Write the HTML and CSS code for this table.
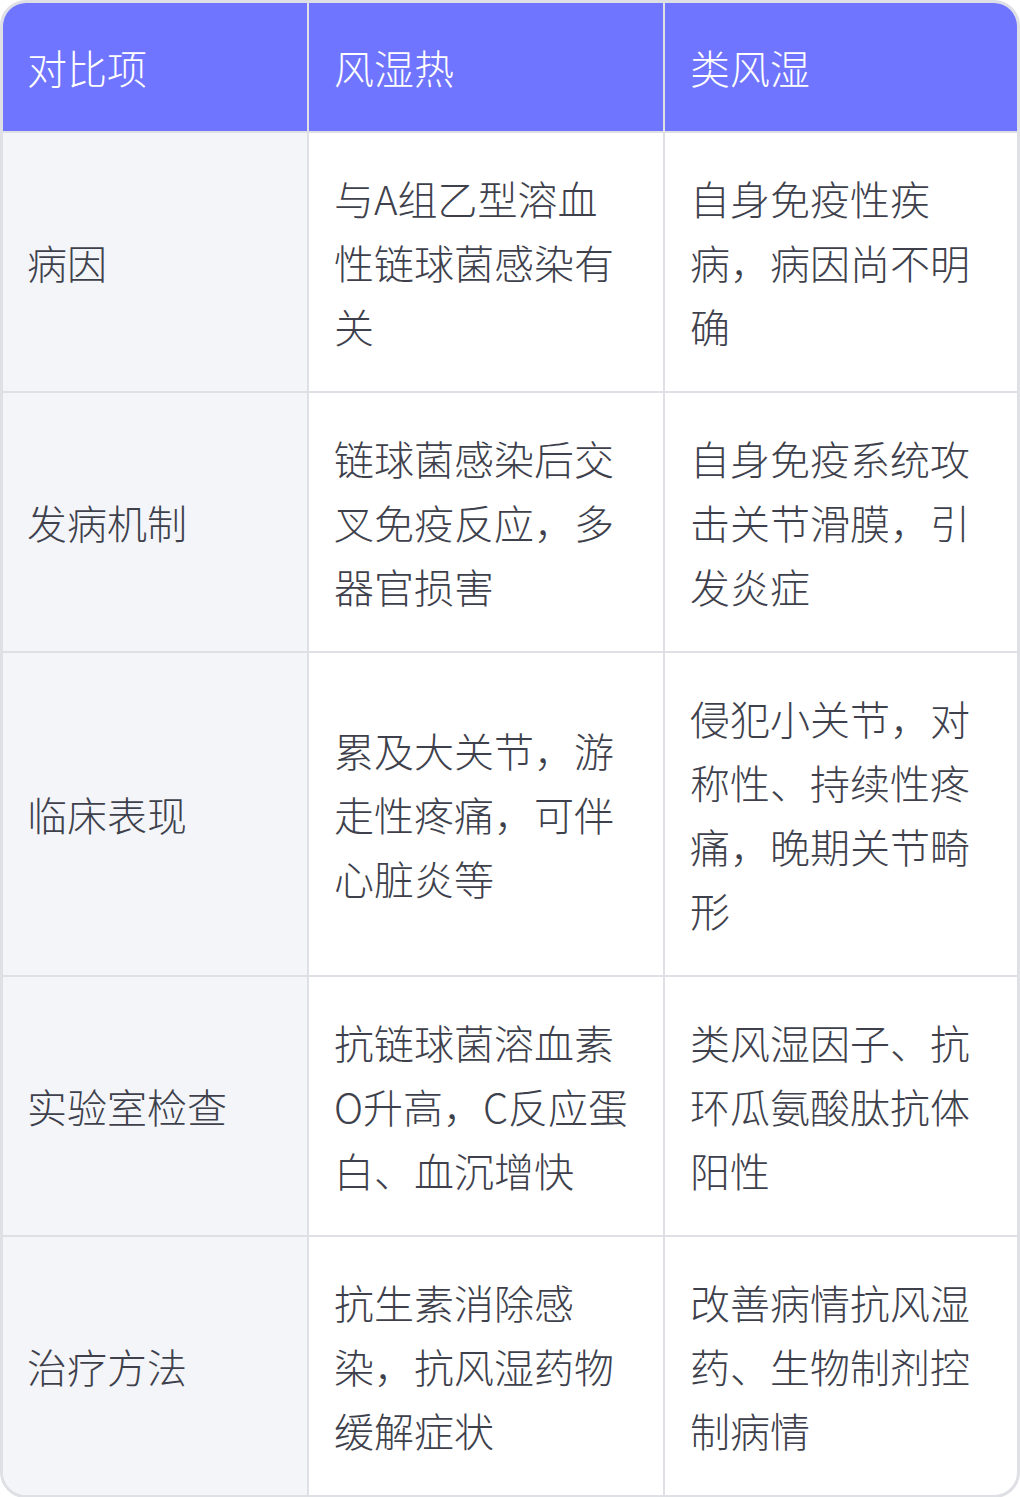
FILE: index.html
```html
<!DOCTYPE html>
<html lang="zh">
<head>
<meta charset="utf-8">
<title>风湿热与类风湿对比</title>
<link rel="stylesheet" href="styles.css">
</head>
<body>
<div class="card">
<table class="cmp">
<thead>
<tr><th class="c1">对比项</th><th class="c2">风湿热</th><th class="c3">类风湿</th></tr>
</thead>
<tbody>
<tr><td class="c1 key">病因</td><td class="c2">与A组乙型溶血性链球菌感染有关</td><td class="c3">自身免疫性疾病，病因尚不明确</td></tr>
<tr><td class="c1 key">发病机制</td><td class="c2">链球菌感染后交叉免疫反应，多器官损害</td><td class="c3">自身免疫系统攻击关节滑膜，引发炎症</td></tr>
<tr><td class="c1 key">临床表现</td><td class="c2">累及大关节，游走性疼痛，可伴心脏炎等</td><td class="c3">侵犯小关节，对称性、持续性疼痛，晚期关节畸形</td></tr>
<tr><td class="c1 key">实验室检查</td><td class="c2">抗链球菌溶血素O升高，C反应蛋白、血沉增快</td><td class="c3">类风湿因子、抗环瓜氨酸肽抗体阳性</td></tr>
<tr class="last"><td class="c1 key">治疗方法</td><td class="c2">抗生素消除感染，抗风湿药物缓解症状</td><td class="c3">改善病情抗风湿药、生物制剂控制病情</td></tr>
</tbody>
</table>
</div>
</body>
</html>
```
FILE: styles.css
```css
html, body {
  margin: 0;
  padding: 0;
  background: #ffffff;
}
.card {
  width: 1020px;
  box-sizing: border-box;
  border: 3px solid #dfe0e5;
  border-radius: 26px;
  overflow: hidden;
  background: #ffffff;
}
.cmp {
  width: 100%;
  border-collapse: separate;
  border-spacing: 0;
  table-layout: fixed;
  font-family: "Noto Sans CJK SC", "Noto Sans", sans-serif;
  font-weight: 300;
  font-size: 40px;
  line-height: 64px;
  color: #3e414c;
}
.cmp th, .cmp td {
  box-sizing: border-box;
  text-align: left;
  vertical-align: middle;
  padding: 33px 24px 33px 25px;
  border-right: 2px solid #dfe0e5;
  border-bottom: 2px solid #dfe0e5;
  word-break: break-all;
}
.cmp th {
  background: #6f75fe;
  color: #ffffff;
  font-weight: 300;
  padding-top: 32px;
  padding-bottom: 32px;
}
.cmp .c1 { width: 306px; padding-left: 24px; }
.cmp .c2 { width: 356px; padding-right: 32px; }
.cmp .c3 { border-right: none; }
.cmp .key { background: #f4f5f9; }
.cmp tr.last td { border-bottom: none; }
```
